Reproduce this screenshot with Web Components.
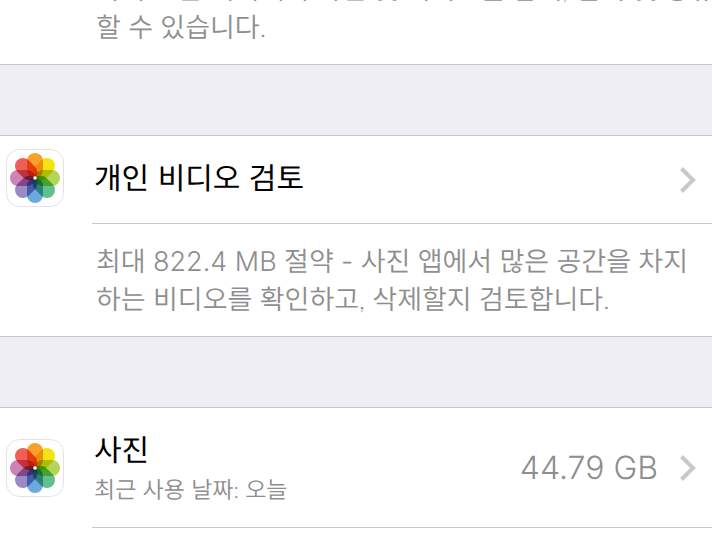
<!DOCTYPE html>
<html lang="ko">
<head>
<meta charset="utf-8">
<meta name="viewport" content="width=device-width, initial-scale=1">
<title>저장 공간</title>
<style>
  body {
    --hangul-font: Lato, "Noto Sans CJK KR", sans-serif;
    --latin-font: Inter, "Noto Sans CJK KR", sans-serif;
    margin: 0;
    background: #efeef4;
    color: #000;
    font-family: var(--latin-font);
    text-rendering: geometricPrecision;
    overflow: hidden;
  }
</style>
</head>
<body>
<storage-list>
  <storage-group class="scrolled">
    <storage-note>하여 모든 기기에서 사진 및 비디오를 탐색, 검색 및 공유<br>할 수 있습니다.</storage-note>
  </storage-group>
  <storage-group>
    <storage-row label="개인 비디오 검토"></storage-row>
    <storage-note>최대 <span>822.4 MB</span> 절약 <span>-</span> 사진 앱에서 많은 공간을 차지<br>하는 비디오를 확인하고, 삭제할지 검토합니다.</storage-note>
  </storage-group>
  <storage-group>
    <storage-row class="tall" label="사진" detail="최근 사용 날짜: 오늘" value="44.79 GB"></storage-row>
    <storage-row></storage-row>
  </storage-group>
</storage-list>

<script>
class PhotosIcon extends HTMLElement {
  constructor() {
    super();
    this.attachShadow({ mode: 'open' });
  }

  connectedCallback() {
    const colors = ['#f7a02c', '#f3e312', '#b5d655', '#62c08f', '#6caade', '#9c8ac6', '#cf82b4', '#ee5f58'];
    const petals = colors.map((color, i) =>
      `<rect x="21" y="4" width="16" height="25" rx="8" fill="${color}" transform="rotate(${i * 45} 29 29)"/>`
    ).join('');

    this.shadowRoot.innerHTML = `
      <style>
        :host {
          display: block;
          width: 58px;
          height: 58px;
        }

        svg {
          display: block;
          isolation: isolate;
        }

        .petals rect {
          mix-blend-mode: multiply;
        }
      </style>
      <svg width="58" height="58" viewBox="0 0 58 58" aria-hidden="true">
        <rect x=".5" y=".5" width="57" height="57" rx="13" fill="#fff" stroke="#e2e2e4"/>
        <g class="petals">${petals}</g>
        <circle cx="29" cy="29" r="1.8" fill="#fff"/>
      </svg>
    `;
  }
}

class StorageNote extends HTMLElement {
  constructor() {
    super();
    this.attachShadow({ mode: 'open' });
  }

  connectedCallback() {
    // Lines break only where the text has a <br>
    this.shadowRoot.innerHTML = `
      <style>
        :host {
          display: block;
          padding: 18px 0 18px 96px;
          color: #8e8e8e;
          font-family: var(--hangul-font);
          font-size: 27px;
          font-weight: 350;
          line-height: 38px;
          white-space: nowrap;
        }

        p {
          margin: 0;
        }

        ::slotted(span) {
          font-family: var(--latin-font);
          line-height: 1;
        }
      </style>
      <p><slot></slot></p>
    `;
  }
}

class StorageRow extends HTMLElement {
  constructor() {
    super();
    this.attachShadow({ mode: 'open' });
  }

  connectedCallback() {
    const label = this.getAttribute('label');
    const detail = this.getAttribute('detail');
    const value = this.getAttribute('value');

    // A row without a label is only the blank start of the next entry
    if (!label) {
      this.shadowRoot.innerHTML = '<style>:host { display: block; height: 88px; }</style>';
      return;
    }

    this.shadowRoot.innerHTML = `
      <style>
        :host {
          display: block;
          --row-height: 87px;
          --icon-lift: 4px;
        }

        :host(.tall) {
          --row-height: 119px;
          --icon-lift: 0;
        }

        button {
          display: flex;
          align-items: center;
          width: 100%;
          padding: 0 0 0 6px;
          border: none;
          background: transparent;
          color: inherit;
          font: inherit;
          text-align: left;
          text-rendering: inherit;
          cursor: pointer;
        }

        photos-icon {
          margin-bottom: var(--icon-lift);
        }

        .content {
          flex: 1;
          display: flex;
          align-items: center;
          gap: 20px;
          min-height: var(--row-height);
          margin-left: 28px;
          padding: 0 14px 0 2px;
          border-bottom: 1px solid #c8c7cc;
        }

        .text {
          flex: 1;
          display: flex;
          flex-direction: column;
          padding-bottom: 2px;
        }

        .label {
          font-size: 30px;
          line-height: 44px;
        }

        .detail {
          color: #8e8e8e;
          font-family: var(--hangul-font);
          font-size: 23px;
          font-weight: 350;
          line-height: 32px;
        }

        .value {
          color: #8e8e8e;
          font-size: 32px;
          font-weight: 350;
        }
      </style>
      <button type="button">
        <photos-icon></photos-icon>
        <span class="content">
          <span class="text">
            <span class="label">${label}</span>
            ${detail ? `<span class="detail">${detail}</span>` : ''}
          </span>
          ${value ? `<span class="value">${value}</span>` : ''}
          <svg width="20" height="28" viewBox="0 0 20 28" fill="none" stroke="#c7c7cc" stroke-width="4" aria-hidden="true">
            <path d="M3.5 2.5 15 14 3.5 25.5"/>
          </svg>
        </span>
      </button>
    `;
  }
}

class StorageGroup extends HTMLElement {
  constructor() {
    super();
    this.attachShadow({ mode: 'open' });
  }

  connectedCallback() {
    this.shadowRoot.innerHTML = `
      <style>
        :host {
          display: block;
          border-top: 1px solid #c8c7cc;
          border-bottom: 1px solid #c8c7cc;
          background: #fff;
        }
      </style>
      <slot></slot>
    `;
  }
}

class StorageList extends HTMLElement {
  constructor() {
    super();
    this.attachShadow({ mode: 'open' });
  }

  connectedCallback() {
    this.shadowRoot.innerHTML = `
      <style>
        :host {
          display: flex;
          flex-direction: column;
          gap: 70px;
          height: 100vh;
          overflow: hidden;
        }

        ::slotted(*) {
          flex: none;
        }

        /* The list is scrolled part way through its first group */
        ::slotted(.scrolled) {
          margin-top: -49px;
        }
      </style>
      <slot></slot>
    `;
  }
}

customElements.define('photos-icon', PhotosIcon);
customElements.define('storage-note', StorageNote);
customElements.define('storage-row', StorageRow);
customElements.define('storage-group', StorageGroup);
customElements.define('storage-list', StorageList);
</script>
</body>
</html>
